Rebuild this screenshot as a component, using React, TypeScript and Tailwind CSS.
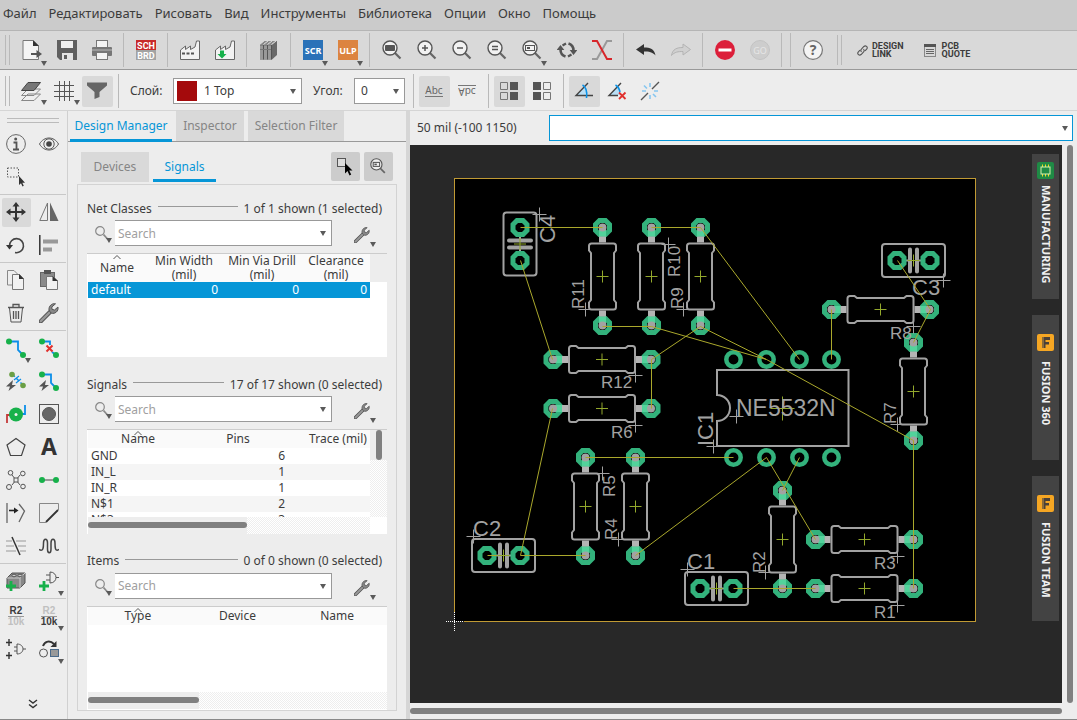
import { useState, type ReactNode } from "react";
import clsx from "clsx";

const MENU = ["Файл", "Редактировать", "Рисовать", "Вид", "Инструменты", "Библиотека", "Опции", "Окно", "Помощь"];

/* ---------- small building blocks ---------- */

function Icon({ children, size = "size-5" }: { children: ReactNode; size?: string }) {
  return (
    <svg viewBox="0 0 20 20" className={clsx("shrink-0", size)} fill="none" stroke="#555" strokeWidth="1" aria-hidden="true">
      {children}
    </svg>
  );
}

function Caret({ className = "" }: { className?: string }) {
  return (
    <svg viewBox="0 0 6 5" className={clsx("pointer-events-none absolute h-[5px] w-[6px]", className)} aria-hidden="true">
      <path d="M0 0H6L3 5Z" fill="#5a5a5a" />
    </svg>
  );
}

function TopButton({ label, menu, children }: { label: string; menu?: boolean; children: ReactNode }) {
  return (
    <button aria-label={label} className="relative flex h-8 w-[35px] shrink-0 items-center justify-center">
      {children}
      {menu && <Caret className="right-[2px] bottom-0" />}
    </button>
  );
}

function OptButton({ label, menu, active, children }: { label: string; menu?: boolean; active?: boolean; children: ReactNode }) {
  return (
    <button
      aria-label={label}
      className={clsx("relative flex size-[31px] shrink-0 items-center justify-center rounded-xs pr-px pb-px", active && "bg-[#d9d9d9]")}
    >
      {children}
      {menu && <Caret className="right-0 bottom-[2px]" />}
    </button>
  );
}

function Divider({ width = "w-[9px]" }: { width?: string }) {
  return (
    <div className={clsx("flex h-[34px] shrink-0 justify-center", width)}>
      <div className="w-px bg-[#b9b9b9]" />
    </div>
  );
}

function Grip() {
  return <div className="h-[30px] w-[5px] shrink-0 border-x border-[#b9b9b9]" />;
}

/* ---------- icons ---------- */

function Magnifier({ children }: { children?: ReactNode }) {
  return (
    <Icon>
      <path d="M12.5 12.5L18.5 18.5" strokeWidth="2.2" stroke="#666" />
      <circle cx="8" cy="8" r="7" fill="#f2f2f2" strokeWidth="1.4" />
      {children}
    </Icon>
  );
}

const WRENCH = (
  <>
    <path d="M1.800 18.200L11 9" stroke="#555" strokeWidth="4.400" strokeLinecap="round" />
    <path d="M1.800 18.200L11 9" stroke="#999" strokeWidth="2.400" strokeLinecap="round" />
    <path d="M16.500 .8C13 0 9.500 3 10 7C11 10 13 10.700 15 10.300C18 9.500 19.500 7 19 4L15.500 7L13 6.300L12.800 4Z" fill="#888" />
  </>
);

const icons = {
  open: (
    <Icon>
      <path d="M1 .5H11L16.500 6V19.500H1Z" fill="#f4f4f4" stroke="#777" />
      <path d="M11 0L17 6H11Z" fill="#333" stroke="none" />
      <path d="M9 14H16" strokeWidth="2" />
      <path d="M14.500 10L20 14L14.500 18Z" fill="#555" stroke="none" />
    </Icon>
  ),
  save: (
    <Icon>
      <path d="M0 0H20V20H3L0 17Z" fill="#606060" stroke="none" />
      <rect x="4" y="1" width="12" height="7" fill="#f0f0f0" stroke="none" />
      <rect x="5" y="13" width="11" height="7" fill="#e5e5e5" stroke="none" />
      <rect x="7" y="15" width="3" height="4" fill="#606060" stroke="none" />
    </Icon>
  ),
  print: (
    <Icon>
      <rect x="4.500" y=".5" width="11" height="8" fill="#f4f4f4" stroke="#777" />
      <rect x="0" y="7" width="20" height="9" rx="1" fill="#777" stroke="none" />
      <path d="M0 10H20" stroke="#bbb" />
      <rect x="4.500" y="12.500" width="11" height="7" fill="#f4f4f4" stroke="#777" />
    </Icon>
  ),
  schBrd: (
    <Icon>
      <rect width="20" height="10" fill="#c82a2a" stroke="none" />
      <rect y="10" width="20" height="10" fill="#a3a3a3" stroke="none" />
      <text x="10" y="8.500" textAnchor="middle" fontSize="9" fontWeight="700" fill="#fff" stroke="none" className="font-[Roboto]">SCH</text>
      <text x="10" y="18.500" textAnchor="middle" fontSize="9" fontWeight="700" fill="#fff" stroke="none" className="font-[Roboto]">BRD</text>
    </Icon>
  ),
  factory: (
    <Icon>
      <path d="M.5 19.500V10L5.500 6V9.500L10.500 6V9.500L15 7L16.500 1H19.500V19.500Z" fill="#f2f2f2" stroke="#666" />
      <path d="M2 13.500H14" strokeWidth="2" strokeDasharray="3 1.500" />
    </Icon>
  ),
  factoryDown: (
    <Icon>
      <path d="M.5 19.500V10L5.500 6V9.500L10.500 6V9.500L15 7L16.500 1H19.500V19.500Z" fill="#f2f2f2" stroke="#666" />
      <path d="M5 10.500H9V14H11.500L7 18.500L2.500 14H5Z" fill="#17b14b" stroke="none" />
    </Icon>
  ),
  books: (
    <Icon>
      <path d="M1 5L6 1H18V15L13 19.500H1Z" fill="#6a6a6a" stroke="none" />
      <path d="M1 5L6 1H18L13 5Z" fill="#8a8a8a" stroke="none" />
      <path d="M4.500 4.500L9 1M8.500 4.500L13 1M12.500 4.500L17 1" stroke="#e0e0e0" />
      <path d="M1 5.500H4V19.500H1ZM5 5.500H8V19.500H5ZM9 5.500H12V19.500H9Z" fill="#999" stroke="none" />
      <path d="M4.500 5V19.500M8.500 5V19.500M12.500 5V19.500" stroke="#555" />
      <path d="M1 9.500H12" stroke="#777" />
    </Icon>
  ),
  scr: (
    <Icon>
      <rect width="20" height="20" fill="#2a72b8" stroke="none" />
      <text x="10" y="13.500" textAnchor="middle" fontSize="9" fontWeight="700" fill="#fff" stroke="none" className="font-['Noto_Sans']">SCR</text>
    </Icon>
  ),
  ulp: (
    <Icon>
      <rect width="20" height="20" fill="#dc8440" stroke="none" />
      <text x="10" y="13.500" textAnchor="middle" fontSize="9" fontWeight="700" fill="#fff" stroke="none" className="font-['Noto_Sans']">ULP</text>
    </Icon>
  ),
  zoomFit: <Magnifier><rect x="3" y="5" width="10" height="6" rx="1" fill="#555" stroke="none" /></Magnifier>,
  zoomIn: <Magnifier><path d="M5 8H11M8 5V11" strokeWidth="1.5" /></Magnifier>,
  zoomOut: <Magnifier><path d="M5 8H11" strokeWidth="1.5" /></Magnifier>,
  zoomRedraw: <Magnifier><path d="M5 6.500H11M5 9.500H11" strokeWidth="1.5" /></Magnifier>,
  zoomSelect: (
    <Magnifier>
      <rect x="3.500" y="5.500" width="9" height="5" />
      <rect x="5" y="7" width="3" height="2" fill="#555" stroke="none" />
    </Magnifier>
  ),
  refresh: (
    <Icon>
      <path d="M3.500 9.500C3.500 13 5.500 15.500 8.500 16.500M16.500 10.500C16.500 7 14.500 4.500 11.500 3.500" strokeWidth="2.600" />
      <path d="M5.500 5.500L9 3.500M14.500 14.500L11 16.500" strokeWidth="2.200" />
      <path d="M-.3 10L3.500 5L7.300 10ZM12.700 10L16.500 15L20.300 10Z" fill="#555" stroke="none" />
    </Icon>
  ),
  ripup: (
    <Icon>
      <path d="M0 19H5L15 1H20" stroke="#999" strokeWidth="2" />
      <path d="M0 1H5L15 19H20" stroke="#d7262b" strokeWidth="2" />
    </Icon>
  ),
  undo: (
    <Icon>
      <path d="M0 9.500L8 4V7.500C14 7.500 18.500 9 19.500 15.500C16.500 12 13 11.500 8 11.500V15Z" fill="#333" stroke="none" />
    </Icon>
  ),
  redo: (
    <Icon>
      <path d="M19.500 9.500L12 4V7.500C6 7.500 1.500 9 .5 15.500C3.500 12 7 11.500 12 11.500V15Z" fill="#d0d0d0" stroke="#b3b3b3" />
    </Icon>
  ),
  stop: (
    <Icon>
      <circle cx="10" cy="10" r="10" fill="#dc1f3a" stroke="none" />
      <rect x="3.500" y="8.500" width="13" height="3" fill="#fff" stroke="none" />
    </Icon>
  ),
  go: (
    <Icon>
      <circle cx="10" cy="10" r="9.500" fill="#cdcdcd" stroke="#c3c3c3" />
      <text x="10" y="13.500" textAnchor="middle" fontSize="9" fill="#e6e6e6" stroke="none" className="font-['Noto_Sans']">GO</text>
    </Icon>
  ),
  help: (
    <Icon>
      <circle cx="10" cy="10" r="9.400" fill="#f4f4f4" stroke="#777" strokeWidth="1.2" />
      <text x="10" y="15" textAnchor="middle" fontSize="14" fontWeight="700" fill="#666" stroke="none" className="font-['Noto_Sans']">?</text>
    </Icon>
  ),
  layers: (
    <Icon>
      <path d="M.5 19.500L7 13H19.500L13 19.500ZM.5 14.500L7 8H19.500L13 14.500Z" fill="#eee" stroke="#888" />
      <path d="M.5 9.500L7 1.500H19.500L13 9.500Z" fill="#777" stroke="#444" />
    </Icon>
  ),
  grid: <Icon><path d="M5.500 0V20M10.500 0V20M15.500 0V20M0 4.500H20M0 10.500H20M0 15.500H20" /></Icon>,
  funnel: <Icon><path d="M0 1.500H20V4.500L12.500 11V16L7.500 18V11L0 4.500Z" fill="#666" stroke="none" /></Icon>,
  squaresA: (
    <Icon>
      <path d="M1.500 1.500H8.500V8.500H1.500ZM1.500 11.500H8.500V18.500H1.500Z" stroke="#777" />
      <path d="M11 1H19V9H11ZM11 11H19V19H11Z" fill="#555" stroke="none" />
    </Icon>
  ),
  squaresB: (
    <Icon>
      <path d="M11.500 1.500H18.500V8.500H11.500ZM11.500 11.500H18.500V18.500H11.500Z" stroke="#777" />
      <path d="M1 1H9V9H1ZM1 11H9V19H1Z" fill="#555" stroke="none" />
    </Icon>
  ),
  angle: (
    <Icon>
      <path d="M3 14L10 6C12.500 8 13.500 10.500 13.500 14Z" fill="#b9def5" stroke="none" />
      <path d="M19 14.500H2L14 2" stroke="#444" strokeWidth="1.400" />
      <path d="M8.500 4C12 6 13.500 10 12.500 17" stroke="#0c93e8" strokeWidth="1.600" />
    </Icon>
  ),
  angleOff: (
    <Icon>
      <path d="M3 14L10 6C12.500 8 13.500 10.500 13.500 14Z" fill="#b9def5" stroke="none" />
      <path d="M11 14.500H2L14 2" stroke="#444" strokeWidth="1.400" />
      <path d="M8.500 4C11 5.500 12.500 8 13 11" stroke="#0c93e8" strokeWidth="1.600" />
      <path d="M12 11.500L18.500 18M18.500 11.500L12 18" stroke="#e0302e" strokeWidth="1.800" />
    </Icon>
  ),
  snap: (
    <Icon>
      <path d="M1 19L8 12M12 8L19 1" strokeWidth="1.400" />
      <path d="M10 2V6M10 14V18M2 10H6M14 10H18M4 4.500L7 7.500M13 13L16 16" stroke="#86c6f0" strokeWidth="1.600" />
    </Icon>
  ),
  info: (
    <Icon>
      <circle cx="10" cy="10" r="9.400" stroke="#666" />
      <circle cx="9.700" cy="5" r="1.500" fill="#555" stroke="none" />
      <path d="M7.500 8.500H10.500V15M7 15.500H13" strokeWidth="1.800" />
    </Icon>
  ),
  eye: (
    <Icon>
      <path d="M.5 10C5 2 15 2 19.500 10C15 18 5 18 .5 10Z" />
      <circle cx="10" cy="10" r="5.200" fill="#eee" />
      <circle cx="10" cy="10" r="2.800" fill="#444" stroke="none" />
    </Icon>
  ),
  marquee: (
    <Icon>
      <rect x="1.500" y="1" width="11" height="9" strokeDasharray="1.500 1.500" />
      <path d="M13 9V18L15 16.200L16.500 19.500L17.800 18.700L16.300 15.700H19Z" fill="#333" stroke="none" />
    </Icon>
  ),
  move: (
    <Icon>
      <path d="M10 3V17M3 10H17" stroke="#333" strokeWidth="2" />
      <path d="M10 0L13.500 4.500H6.500ZM10 20L13.500 15.500H6.500ZM0 10L4.500 6.500V13.500ZM20 10L15.500 6.500V13.500Z" fill="#333" stroke="none" />
    </Icon>
  ),
  mirror: (
    <Icon>
      <path d="M8.500 1V18.500H.8Z" stroke="#777" />
      <path d="M11 .5L19.500 19H11Z" fill="#666" stroke="none" />
    </Icon>
  ),
  rotate: (
    <Icon>
      <path d="M3.500 11A7 7 0 1 1 9 17.500" stroke="#444" strokeWidth="1.600" />
      <path d="M0 10H7L3.500 14.500Z" fill="#333" stroke="none" />
    </Icon>
  ),
  align: (
    <Icon>
      <path d="M.8 0V20" stroke="#333" strokeWidth="1.500" />
      <path d="M4 4.500H19V8.500H4ZM4 12.500H13V16.500H4Z" fill="#999" stroke="none" />
    </Icon>
  ),
  copy: (
    <Icon>
      <path d="M1.500 .5H8L11.500 4V15H1.500Z" fill="#eee" stroke="#888" />
      <path d="M6.500 4.500H13.500L17.500 9V19.500H6.500Z" fill="#f2f2f2" stroke="#777" />
      <path d="M13 4L18 9H13Z" fill="#333" stroke="none" />
    </Icon>
  ),
  paste: (
    <Icon>
      <rect x="1.500" y="2.500" width="14" height="14" fill="#8a8a8a" stroke="#666" />
      <rect x="5" y="0" width="7" height="4" fill="#555" stroke="none" />
      <path d="M7.500 6.500H14L18.500 11V19.500H7.500Z" fill="#f2f2f2" stroke="#777" />
      <path d="M13.500 6L19 11H13.500Z" fill="#333" stroke="none" />
    </Icon>
  ),
  trash: (
    <Icon>
      <path d="M3.500 5L5 19H15L16.500 5" />
      <path d="M2 4.500H18M7 4V1.500H13V4M7.500 8V16M10 8V16M12.500 8V16" strokeWidth="1.300" />
    </Icon>
  ),
  wrench: <Icon>{WRENCH}</Icon>,
  route: (
    <Icon>
      <path d="M3 3.500H12V12L17 17" stroke="#0c8ee8" strokeWidth="1.800" />
      <circle cx="3" cy="3.500" r="3" fill="#17b14b" stroke="none" />
      <circle cx="17" cy="17" r="3" fill="#17b14b" stroke="none" />
    </Icon>
  ),
  unroute: (
    <Icon>
      <path d="M3 3.500H11V7M13 14L17 17" stroke="#0c8ee8" strokeWidth="1.800" />
      <circle cx="3" cy="3.500" r="3" fill="#17b14b" stroke="none" />
      <circle cx="17" cy="17" r="3" fill="#17b14b" stroke="none" />
      <path d="M7.500 7.500L13.500 13.500M13.500 7.500L7.500 13.500" stroke="#e0302e" strokeWidth="2" />
    </Icon>
  ),
  autoroute: (
    <Icon>
      <path d="M6 3L17 14" stroke="#0c8ee8" strokeWidth="1.500" strokeDasharray="4 2" />
      <path d="M8 9L13 5M10 12L15 8" stroke="#0c8ee8" strokeWidth="1.200" />
      <circle cx="6" cy="3.500" r="2.800" fill="#6b9f45" stroke="none" />
      <circle cx="17" cy="14.500" r="2.800" fill="#6b9f45" stroke="none" />
      <path d="M7 9L0 15.500H4L2.500 20L10 14H6Z" fill="#555" stroke="none" />
    </Icon>
  ),
  quickroute: (
    <Icon>
      <path d="M3 3.500H12V12L17 17" stroke="#0c8ee8" strokeWidth="1.800" />
      <circle cx="3" cy="3.500" r="3" fill="#17b14b" stroke="none" />
      <circle cx="17" cy="17" r="3" fill="#17b14b" stroke="none" />
      <path d="M7 9L0 15.500H4L2.500 20L10 14H6Z" fill="#555" stroke="none" />
    </Icon>
  ),
  via: (
    <Icon>
      <path d="M1 19V11H6" stroke="#c43a3a" strokeWidth="1.800" />
      <path d="M19 1V10H14" stroke="#0c8ee8" strokeWidth="1.800" />
      <circle cx="10" cy="10.500" r="7" fill="#17b14b" stroke="none" />
      <circle cx="10" cy="10.500" r="1.500" fill="#f2f2f2" stroke="none" />
    </Icon>
  ),
  hole: (
    <Icon>
      <rect x=".5" y=".5" width="19" height="19" />
      <circle cx="10" cy="10" r="6.500" fill="#666" />
    </Icon>
  ),
  polygon: <Icon><path d="M10 1.500L19 8L15.500 18.500H4.500L1 8Z" stroke="#444" strokeWidth="1.200" /></Icon>,
  text: (
    <Icon>
      <text x="10" y="18" textAnchor="middle" fontSize="23" fontWeight="700" fill="#333" stroke="none" className="font-['Noto_Sans']">A</text>
    </Icon>
  ),
  ratsnest: (
    <Icon>
      <path d="M6 5L14 15M14 5L6 15" />
      <rect x="8" y="8" width="4" height="4" fill="#eee" />
      <circle cx="4.500" cy="2.800" r="2.300" />
      <circle cx="16.800" cy="3.500" r="2.300" />
      <circle cx="3" cy="17" r="2.500" />
      <circle cx="17" cy="16.500" r="2.300" />
    </Icon>
  ),
  airwire: (
    <Icon>
      <path d="M3 10H17" stroke="#999" strokeWidth="2" />
      <circle cx="3" cy="10" r="3" fill="#17b14b" stroke="none" />
      <circle cx="17" cy="10" r="3" fill="#17b14b" stroke="none" />
    </Icon>
  ),
  split: (
    <Icon>
      <path d="M1 0V20M13 1L18.500 8L13 19" stroke="#666" strokeWidth="1.300" />
      <path d="M3 7.500H9" stroke="#222" strokeWidth="1.600" />
      <path d="M8 4.500L12.500 7.500L8 10.500Z" fill="#222" stroke="none" />
    </Icon>
  ),
  miter: (
    <Icon>
      <path d="M7 19.500H.5V.5H19.500V7" stroke="#888" />
      <path d="M7 19L19 7" stroke="#333" strokeWidth="1.800" />
    </Icon>
  ),
  cutLines: (
    <Icon>
      <path d="M0 5H6M10 5H20M0 10H8M12 10H20M0 15H10M14 15H20" stroke="#999" />
      <path d="M6 1L14 19" stroke="#333" strokeWidth="1.500" />
    </Icon>
  ),
  meander: <Icon><path d="M0 13.500C4.500 16 4.500 11 4.500 7C4.500 2 8.500 2 8.500 7V13C8.500 18 12 18 12 13V7C12 2 16 2 16 7C16 11 16 16 20 13.500" stroke="#444" strokeWidth="1.500" /></Icon>,
  addPart: (
    <Icon>
      <path d="M1 7L6 2H19V12L14 17H1Z" fill="#888" stroke="#555" />
      <path d="M1 7H14V17M14 7L19 2" stroke="#ccc" />
      <ellipse cx="8" cy="4.500" rx="2" ry="1.300" fill="#ccc" />
      <ellipse cx="14" cy="4.500" rx="2" ry="1.300" fill="#ccc" />
      <path d="M5 10V20M0 15H10" stroke="#17b14b" strokeWidth="2.800" />
    </Icon>
  ),
  addGate: (
    <Icon>
      <path d="M11 1V12C19 12 19 1 11 1ZM7 4H11M7 9H11M17 6.500H20" />
      <path d="M5 10V20M0 15H10" stroke="#17b14b" strokeWidth="2.800" />
    </Icon>
  ),
  gates: (
    <Icon>
      <path d="M11 5V15C19 15 19 5 11 5ZM8 8H11M8 12H11M17 10H20" />
      <path d="M3 0V7M0 3.500H6M3 13V20M0 16.500H6" stroke="#333" strokeWidth="1.400" />
    </Icon>
  ),
  replace: (
    <Icon>
      <path d="M4 7C6 2 11 1 15 5" stroke="#333" strokeWidth="2" />
      <path d="M17.500 2V8H11.500Z" fill="#333" stroke="none" />
      <circle cx="4.500" cy="14" r="4" />
      <rect x="11.500" y="10.500" width="8" height="7" fill="#999" stroke="#4a6a8a" />
    </Icon>
  ),
  pick: (
    <Icon>
      <rect x="2.500" y="2.500" width="8" height="8" fill="#ddd" />
      <path d="M10 7V17.500L12.500 15L14.500 19.500L16.200 18.500L14.200 14.500H17.500Z" fill="#000" stroke="none" />
    </Icon>
  ),
  zoomTo: (
    <Icon size="size-4">
      <path d="M12.500 12.500L18.500 18.500" strokeWidth="2.200" stroke="#666" />
      <circle cx="8" cy="8" r="7" fill="#eee" strokeWidth="1.400" />
      <rect x="4" y="5.500" width="8" height="5" strokeWidth="1.300" />
      <rect x="5.500" y="7" width="3" height="2" fill="#555" stroke="none" />
    </Icon>
  ),
};

const r2Top = (
  <span className="flex flex-col font-['Liberation_Sans'] text-[10px] leading-[10px] font-bold">
    <span className="border-b border-[#999]">R2</span>
    <span className="text-[#c0c0c0]">10k</span>
  </span>
);
const r2Bottom = (
  <span className="flex flex-col font-['Liberation_Sans'] text-[10px] leading-[10px] font-bold">
    <span className="border-b border-[#999] text-[#c0c0c0]">R2</span>
    <span>10k</span>
  </span>
);

/* ---------- toolbars ---------- */

function MenuBar() {
  return (
    <nav className="flex h-[31px] shrink-0 items-center gap-3 border-b border-[#b5b5b5] bg-[#cbcbcb] pb-1 pl-[3px] text-[13px]">
      {MENU.map((item) => (
        <button key={item} className="shrink-0">{item}</button>
      ))}
    </nav>
  );
}

function MainToolbar() {
  return (
    <div className="flex h-[39px] shrink-0 items-center border-b border-[#999] bg-[#d9d9d9] pl-[5px]">
      <Grip />
      <div className="w-1 shrink-0" />
      <TopButton label="Открыть" menu>{icons.open}</TopButton>
      <TopButton label="Сохранить">{icons.save}</TopButton>
      <TopButton label="Печать">{icons.print}</TopButton>
      <Divider />
      <TopButton label="SCH/BRD">{icons.schBrd}</TopButton>
      <Divider />
      <TopButton label="CAM">{icons.factory}</TopButton>
      <TopButton label="CAM export">{icons.factoryDown}</TopButton>
      <Divider />
      <TopButton label="Библиотека">{icons.books}</TopButton>
      <Divider />
      <TopButton label="SCR" menu>{icons.scr}</TopButton>
      <TopButton label="ULP" menu>{icons.ulp}</TopButton>
      <Divider />
      <TopButton label="Zoom fit">{icons.zoomFit}</TopButton>
      <TopButton label="Zoom in">{icons.zoomIn}</TopButton>
      <TopButton label="Zoom out">{icons.zoomOut}</TopButton>
      <TopButton label="Redraw">{icons.zoomRedraw}</TopButton>
      <TopButton label="Zoom select" menu>{icons.zoomSelect}</TopButton>
      <TopButton label="Refresh">{icons.refresh}</TopButton>
      <TopButton label="Ratsnest">{icons.ripup}</TopButton>
      <Divider />
      <TopButton label="Undo">{icons.undo}</TopButton>
      <TopButton label="Redo">{icons.redo}</TopButton>
      <Divider />
      <TopButton label="Stop">{icons.stop}</TopButton>
      <TopButton label="Go">{icons.go}</TopButton>
      <Divider />
      <Divider />
      <TopButton label="Help">{icons.help}</TopButton>
      <div className="w-[7px] shrink-0" />
      <Grip />
      <button className="ml-[15px] flex shrink-0 items-center gap-1 text-left font-[Roboto] text-[9px] leading-[8px] font-bold">
        <svg viewBox="0 0 12 12" className="size-[11px]" fill="none" stroke="#555" strokeWidth="1.2" aria-hidden="true">
          <path d="M5 7.500C3.800 6.500 4 5.300 4.800 4.500L7.500 1.600C9.500 0 12.200 2.200 10.700 4.300L8.800 6.300M7 4.500C8.200 5.500 8 6.700 7.200 7.500L4.500 10.400C2.500 12-.2 9.800 1.300 7.700L3.200 5.700" />
        </svg>
        <span>DESIGN<br />LINK</span>
      </button>
      <button className="ml-5 flex shrink-0 items-center gap-[6px] text-left font-[Roboto] text-[9px] leading-[8px] font-bold">
        <svg viewBox="0 0 12 13" className="h-[13px] w-3" fill="none" aria-hidden="true">
          <rect x=".5" y=".5" width="11" height="12" stroke="#888" />
          <rect width="12" height="3" fill="#555" />
          <path d="M2 5.500H10M2 7.500H10M2 9.500H10" stroke="#666" />
        </svg>
        <span>PCB<br />QUOTE</span>
      </button>
    </div>
  );
}

function OptionsBar() {
  const [layer, setLayer] = useState("1 Top");
  const [angle, setAngle] = useState("0");

  return (
    <div className="flex h-[41px] shrink-0 items-center border-b border-[#d5d5d5] pt-[2px] pl-[5px]">
      <Grip />
      <div className="ml-[6px] flex shrink-0 gap-[2px]">
        <OptButton label="Layers" menu>{icons.layers}</OptButton>
        <OptButton label="Grid" menu>{icons.grid}</OptButton>
        <OptButton label="Filter" active>{icons.funnel}</OptButton>
      </div>
      <Divider width="w-[11px]" />
      <label htmlFor="layer" className="w-[49px] shrink-0 pl-[6px]">Слой:</label>
      <div className="relative h-[26px] w-[129px] shrink-0">
        <select
          id="layer"
          value={layer}
          onChange={(e) => setLayer(e.target.value)}
          className="h-full w-full appearance-none border border-[#999] bg-white pl-[30px]"
        >
          <option>1 Top</option>
          <option>16 Bottom</option>
        </select>
        <span className="pointer-events-none absolute top-[3px] left-1 size-5 bg-[#a40a0c]" />
        <Caret className="top-[11px] right-[6px]" />
      </div>
      <label htmlFor="angle" className="w-[52px] shrink-0 pl-[11px]">Угол:</label>
      <div className="relative h-[26px] w-[51px] shrink-0">
        <select
          id="angle"
          value={angle}
          onChange={(e) => setAngle(e.target.value)}
          className="h-full w-full appearance-none border border-[#999] bg-white pl-[6px]"
        >
          <option>0</option>
          <option>90</option>
        </select>
        <Caret className="top-[11px] right-[6px]" />
      </div>
      <div className="w-[3px] shrink-0" />
      <Divider width="w-[11px]" />
      <div className="flex shrink-0 gap-[2px]">
        <OptButton label="Text upright" active>
          <span className="border-b border-[#777] text-[10px] leading-[11px] text-[#666]">Abc</span>
        </OptButton>
        <OptButton label="Text mirrored">
          <span className="-scale-y-100 border-b border-[#777] text-[10px] leading-[11px] text-[#666]">Abc</span>
        </OptButton>
      </div>
      <Divider width="w-[11px]" />
      <div className="flex shrink-0 gap-[2px]">
        <OptButton label="Group right" active>{icons.squaresA}</OptButton>
        <OptButton label="Group left">{icons.squaresB}</OptButton>
      </div>
      <Divider width="w-[11px]" />
      <div className="flex shrink-0 gap-[2px]">
        <OptButton label="Angle" active>{icons.angle}</OptButton>
        <OptButton label="Angle off">{icons.angleOff}</OptButton>
        <OptButton label="Snap">{icons.snap}</OptButton>
      </div>
    </div>
  );
}

/* ---------- left tool palette ---------- */

type Tool = { name: string; icon: ReactNode; menu?: boolean; active?: boolean };

const TOOL_GROUPS: Tool[][] = [
  [
    { name: "Info", icon: icons.info },
    { name: "Show", icon: icons.eye },
    { name: "Group", icon: icons.marquee },
  ],
  [
    { name: "Move", icon: icons.move, active: true },
    { name: "Mirror", icon: icons.mirror },
    { name: "Rotate", icon: icons.rotate },
    { name: "Align", icon: icons.align },
  ],
  [
    { name: "Copy", icon: icons.copy },
    { name: "Paste", icon: icons.paste },
    { name: "Delete", icon: icons.trash },
    { name: "Change", icon: icons.wrench },
  ],
  [
    { name: "Route", icon: icons.route, menu: true },
    { name: "Ripup", icon: icons.unroute },
    { name: "Autorouter", icon: icons.autoroute },
    { name: "Quickroute", icon: icons.quickroute },
    { name: "Via", icon: icons.via },
    { name: "Hole", icon: icons.hole },
    { name: "Polygon", icon: icons.polygon },
    { name: "Text", icon: icons.text },
    { name: "Ratsnest", icon: icons.ratsnest },
    { name: "Signal", icon: icons.airwire },
    { name: "Split", icon: icons.split },
    { name: "Miter", icon: icons.miter },
    { name: "Slice", icon: icons.cutLines },
    { name: "Meander", icon: icons.meander },
  ],
  [
    { name: "Add part", icon: icons.addPart },
    { name: "Add gate", icon: icons.addGate, menu: true },
  ],
  [
    { name: "Name", icon: r2Top },
    { name: "Value", icon: r2Bottom, menu: true },
    { name: "Gateswap", icon: icons.gates },
    { name: "Replace", icon: icons.replace, menu: true },
  ],
];

function ToolPalette() {
  return (
    <aside className="flex w-[68px] shrink-0 flex-col border-r border-[#d0d0d0] pr-px">
      <div className="mx-[7px] mt-[7px] mb-1 h-[5px] shrink-0 border-y border-[#bbb]" />
      {TOOL_GROUPS.map((group, i) => (
        <div key={i} className={clsx("grid shrink-0 grid-cols-2 pt-px", i < TOOL_GROUPS.length - 1 && "border-b border-[#c8c8c8]")}>
          {group.map((tool) => (
            <div key={tool.name} className="flex h-[33px] items-center justify-center">
              <button
                aria-label={tool.name}
                className={clsx("relative flex size-[29px] items-center justify-center rounded-xs pr-px pb-px", tool.active && "bg-[#d9d9d9]")}
              >
                {tool.icon}
                {tool.menu && <Caret className="right-0 bottom-0" />}
              </button>
            </div>
          ))}
        </div>
      ))}
      <button aria-label="More tools" className="mt-auto mb-[9px] flex h-3 items-center justify-center">
        <svg viewBox="0 0 10 10" className="size-[10px]" fill="none" stroke="#333" strokeWidth="1.4" aria-hidden="true">
          <path d="M1 1L5 4L9 1M1 5.500L5 8.500L9 5.500" />
        </svg>
      </button>
    </aside>
  );
}

/* ---------- design manager ---------- */

function Section({ title, status, children }: { title: string; status: string; children: ReactNode }) {
  const id = "search-" + title;
  return (
    <section className="flex min-h-0 flex-1 flex-col">
      <div className="mr-[5px] flex h-[18px] shrink-0 items-center gap-[6px] pt-px">
        <label htmlFor={id}>{title}</label>
        <span className="mb-1 h-px flex-1 bg-[#999]" />
        <span>{status}</span>
      </div>
      <div className="mt-[3px] flex h-[26px] shrink-0 items-center">
        <button aria-label="Search options" className="relative h-5 w-7 shrink-0 pl-2">
          <svg viewBox="0 0 14 14" className="size-3.5" fill="none" stroke="#888" aria-hidden="true">
            <circle cx="5" cy="5" r="4.300" strokeWidth="1.200" />
            <path d="M8.500 8.500L12.500 13" strokeWidth="1.800" />
          </svg>
          <Caret className="right-[3px] bottom-0" />
        </button>
        <div className="relative h-full w-[217px] shrink-0">
          <input
            id={id}
            placeholder="Search"
            className="h-full w-full border border-l-0 border-[#999] bg-white pl-[3px] outline-none placeholder:text-[#a0a0a0]"
          />
          <Caret className="top-[11px] right-[6px]" />
        </div>
        <button aria-label="Column settings" className="relative ml-[22px] h-[26px] w-[22px] shrink-0 pt-1">
          <span className="flex"><Icon size="size-4">{WRENCH}</Icon></span>
          <Caret className="right-0 -bottom-px" />
        </button>
      </div>
      <div className="mt-[7px] flex min-h-0 flex-1 flex-col border-t border-[#ccc] bg-white pl-px">{children}</div>
    </section>
  );
}

function SortArrow() {
  return (
    <svg viewBox="0 0 8 4" className="absolute top-px left-1/2 h-1 w-2 -translate-x-1/2" fill="none" stroke="#555" aria-hidden="true">
      <path d="M.5 4L4 .5L7.500 4" />
    </svg>
  );
}

const NET_COLUMNS = ["Min Width", "Min Via Drill", "Clearance"];
const SIGNALS = [
  { name: "GND", pins: 6 },
  { name: "IN_L", pins: 1 },
  { name: "IN_R", pins: 1 },
  { name: "N$1", pins: 2 },
  { name: "N$3", pins: 3 },
];

const DOTS = "bg-[repeating-conic-gradient(#fff_0_25%,#eee_0_50%)] bg-[length:2px_2px]";

function DesignManager() {
  const [tab, setTab] = useState("Signals");

  return (
    <div className="flex w-[338px] shrink-0 flex-col">
      <div className="flex h-[31px] shrink-0 gap-1 border-b border-[#999] pl-[2px] text-[#858585]">
        <button className="h-[31px] w-[102px] border-b-3 border-[#0696d7] pt-[2px] text-[#0696d7]">Design Manager</button>
        <button className="w-[68px] bg-[#d9d9d9]">Inspector</button>
        <button className="w-24 bg-[#d9d9d9]">Selection Filter</button>
      </div>

      <div className="mx-[10px] mt-[10px] mb-[2px] flex h-[30px] shrink-0 gap-1 pr-[3px] pl-[3px]">
        {["Devices", "Signals"].map((name) => (
          <button
            key={name}
            onClick={() => setTab(name)}
            className={clsx(
              name === "Devices" ? "w-[68px]" : "w-[63px]",
              tab === name ? "border-b-3 border-[#0696d7] pt-[2px] text-[#0696d7]" : "bg-[#d9d9d9] text-[#858585]"
            )}
          >
            {name}
          </button>
        ))}
        <button aria-label="Pick" className="ml-auto flex size-[29px] items-center justify-center rounded-xs bg-[#ccc] pr-px pb-px">{icons.pick}</button>
        <button aria-label="Zoom to" className="flex size-[29px] items-center justify-center rounded-xs bg-[#ccc] pr-px pb-px">{icons.zoomTo}</button>
      </div>

      <div className="mx-[9px] mb-2 flex min-h-0 flex-1 flex-col gap-[18px] border border-[#d3d3d3] pt-[14px] pr-[9px] pl-[9px]">
        <Section title="Net Classes" status="1 of 1 shown (1 selected)">
          <div className="flex">
            <table className="w-[282px] table-fixed">
              <thead>
                <tr className="h-7 bg-[#fafafa] leading-[14px]">
                  <th className="relative w-[58px] font-normal"><SortArrow />Name</th>
                  {NET_COLUMNS.map((col, i) => (
                    <th key={col} className={clsx("p-0 font-normal", i === 0 ? "w-[76px]" : i === 1 ? "w-20" : "w-[68px]")}>
                      {col}<br />(mil)
                    </th>
                  ))}
                </tr>
              </thead>
              <tbody>
                <tr className="h-4 bg-[#0696d7] leading-4 text-white">
                  <td className="pl-[3px]">default</td>
                  <td className="pr-1 text-right">0</td>
                  <td className="pr-[3px] text-right">0</td>
                  <td className="pr-[3px] text-right">0</td>
                </tr>
              </tbody>
            </table>
            <div className="h-7 flex-1 bg-[#ededed]" />
          </div>
        </Section>

        <Section title="Signals" status="17 of 17 shown (0 selected)">
          <div className="flex min-h-0 flex-1">
            <div className="min-w-0 flex-1 overflow-hidden">
              <table className="w-[300px] table-fixed">
                <thead>
                  <tr className="h-[18px] bg-[#fafafa] leading-[18px]">
                    <th className="relative font-normal"><SortArrow />Name</th>
                    <th className="font-normal">Pins</th>
                    <th className="font-normal">Trace (mil)</th>
                  </tr>
                </thead>
                <tbody>
                  {SIGNALS.map((s) => (
                    <tr key={s.name} className="h-4 leading-4 even:bg-[#f5f5f5]">
                      <td className="pl-[3px]">{s.name}</td>
                      <td className="pr-[3px] text-right">{s.pins}</td>
                      <td />
                    </tr>
                  ))}
                </tbody>
              </table>
            </div>
            <div className={clsx("w-[17px] shrink-0", DOTS)}>
              <div className="flex h-[30px] justify-center bg-[#ededed]"><div className="w-[6px] rounded-full bg-[#808080]" /></div>
            </div>
          </div>
          <div className={clsx("mr-[17px] h-[17px] shrink-0", DOTS)}>
            <div className="flex h-full w-[159px] items-center bg-[#ededed]"><div className="h-[6px] w-full rounded-full bg-[#808080]" /></div>
          </div>
        </Section>

        <Section title="Items" status="0 of 0 shown (0 selected)">
          <table className="w-full table-fixed">
            <thead>
              <tr className="h-[18px] bg-[#fafafa] leading-[18px]">
                <th className="relative font-normal"><SortArrow />Type</th>
                <th className="font-normal">Device</th>
                <th className="font-normal">Name</th>
              </tr>
            </thead>
          </table>
          <div className={clsx("mt-auto mb-px h-[17px] shrink-0", DOTS)}>
            <div className="flex h-full w-[111px] items-center bg-[#ededed]"><div className="h-[6px] w-full rounded-full bg-[#808080]" /></div>
          </div>
        </Section>
      </div>
    </div>
  );
}

/* ---------- board ---------- */

const SILK = "#a2a2a2";
const PAD = "#33b27c";

function Cross({ x, y, r = 6, color = SILK }: { x: number; y: number; r?: number; color?: string }) {
  return <path d={`M${x - r} ${y}H${x + r}M${x} ${y - r}V${y + r}`} stroke={color} />;
}

// octagonal pad with a drill hole
function Pad({ x, y }: { x: number; y: number }) {
  return <path d="M-3 -7H3L7 -3V3L3 7H-3L-7 3V-3Z" transform={`translate(${x} ${y})`} fill="none" stroke={PAD} strokeWidth="5" />;
}

function Resistor({ x, y, vertical }: { x: number; y: number; vertical?: boolean }) {
  return (
    <g transform={`translate(${x} ${y})${vertical ? " rotate(90)" : ""}`}>
      <Pad x={-49} y={0} />
      <Pad x={49} y={0} />
      <path d="M-49 0H-40M49 0H40" stroke="#52d39b" strokeWidth="7" />
      <path d="M-40 0H-34M40 0H34" stroke="#b4b4b4" strokeWidth="7" />
      <circle cx="-49" cy="0" r="4" fill={SILK} />
      <circle cx="49" cy="0" r="4" fill={SILK} />
      <path
        d="M-33 -11V11Q-33 13.500 -30.500 13.500H-26L-23.500 11.500H23.500L26 13.500H30.500Q33 13.500 33 11V-11Q33 -13.500 30.500 -13.500H26L23.500 -11.500H-23.500L-26 -13.500H-30.500Q-33 -13.500 -33 -11Z"
        stroke={SILK}
        strokeWidth="2"
      />
      <Cross x={0} y={0} color="#93a82c" />
    </g>
  );
}

function Capacitor({ x, y, vertical }: { x: number; y: number; vertical?: boolean }) {
  return (
    <g transform={`translate(${x} ${y})${vertical ? " rotate(90)" : ""}`}>
      <rect x="-31.500" y="-16.500" width="63" height="33" rx="3" stroke={SILK} strokeWidth="2" />
      <path d="M-10 0H-4M4 0H10" stroke={SILK} strokeWidth="2" />
      <path d="M-3.500 -11V11M3.500 -11V11" stroke={SILK} strokeWidth="4" strokeLinecap="round" />
      <Pad x={-16.5} y={0} />
      <Pad x={16.5} y={0} />
      <Cross x={0} y={0} color="#93a82c" />
    </g>
  );
}

const RESISTORS = [
  { x: 602.5, y: 276.5, vertical: true },
  { x: 651.5, y: 276.5, vertical: true },
  { x: 700.5, y: 276.5, vertical: true },
  { x: 602, y: 359.5 },
  { x: 602, y: 408.5 },
  { x: 880.5, y: 309.5 },
  { x: 913.5, y: 391.5, vertical: true },
  { x: 585.5, y: 506.5, vertical: true },
  { x: 635.5, y: 506.5, vertical: true },
  { x: 782.5, y: 539.5, vertical: true },
  { x: 864.5, y: 539.5 },
  { x: 864.5, y: 588.5 },
];

const CAPACITORS = [
  { x: 520, y: 244, vertical: true },
  { x: 913.5, y: 260.5 },
  { x: 503.5, y: 555.5 },
  { x: 716.5, y: 588.5 },
];

// text anchor plus the position of its origin cross
const LABELS = [
  { t: "C4", x: 555, y: 243, s: 22, v: true, cx: 539.5, cy: 214.5 },
  { t: "C3", x: 912, y: 295, s: 22, cx: 943.5, cy: 280.5 },
  { t: "C2", x: 473, y: 536, s: 22, cx: 473.5, cy: 536.5 },
  { t: "C1", x: 687, y: 569, s: 22, cx: 687.5, cy: 569.5 },
  { t: "IC1", x: 713, y: 446, s: 22, v: true, cx: 713.5, cy: 446.5 },
  { t: "NE5532N", x: 736, y: 416, s: 23, cx: 736.5, cy: 416.5 },
  { t: "R11", x: 584, y: 309, s: 17, v: true, cx: 585.5, cy: 309.5 },
  { t: "R10", x: 680, y: 277, s: 17, v: true, cx: 668.5, cy: 244.5 },
  { t: "R9", x: 683, y: 309, s: 17, v: true, cx: 683.5, cy: 309.5 },
  { t: "R12", x: 601, y: 388, s: 17, cx: 635.5, cy: 375.5 },
  { t: "R6", x: 611, y: 438, s: 17, cx: 635.5, cy: 425.5 },
  { t: "R8", x: 890, y: 339, s: 17, cx: 913.5, cy: 326.5 },
  { t: "R7", x: 896, y: 424, s: 17, v: true, cx: 897.5, cy: 424.5 },
  { t: "R5", x: 615, y: 497, s: 17, v: true, cx: 602.5, cy: 473.5 },
  { t: "R4", x: 617, y: 540, s: 17, v: true, cx: 618.5, cy: 539.5 },
  { t: "R2", x: 765, y: 573, s: 17, v: true, cx: 765.5, cy: 572.5 },
  { t: "R3", x: 874, y: 569, s: 17, cx: 897.5, cy: 556.5 },
  { t: "R1", x: 874, y: 618, s: 17, cx: 897.5, cy: 605.5 },
];

const AIRWIRES = [
  "M520.5 227.5H602.5",
  "M520.5 260.5L552.5 359.5",
  "M602.5 326.5H651.5L766.5 359.5",
  "M651.5 227.5H700.5L799.5 359.5",
  "M651.5 359.5L700.5 326.5L766.5 359.5L913.5 440.5",
  "M651.5 359.5V408.5",
  "M552.5 408.5L520.5 555.5",
  "M487.5 555.5H497M520.5 555.5H585.5",
  "M585.5 457.5H733.5",
  "M635.5 555.5L766.5 457.5L815.5 539.5",
  "M799.5 457.5L782.5 490.5",
  "M733.5 588.5H815.5",
  "M913.5 440.5V588.5",
  "M897.5 260.5L930.5 309.5L913.5 342.5",
  "M831.5 309.5V359.5",
];

function Board() {
  return (
    <svg viewBox="410 145 652 558" className="block h-full w-full" fill="none" role="img" aria-label="PCB layout">
      <rect x="454.5" y="178.5" width="521" height="443" fill="#000" stroke="#c09a34" />
      {RESISTORS.map((r, i) => <Resistor key={i} {...r} />)}
      {CAPACITORS.map((c, i) => <Capacitor key={i} {...c} />)}

      <path d="M717 370H848.500V446H717V421A13 13 0 0 0 717 395Z" stroke={SILK} strokeWidth="2" />
      {[733.5, 766.5, 799.5, 831.5].map((x) => (
        <g key={x} stroke={PAD} strokeWidth="4.5">
          <circle cx={x} cy="359.5" r="7.200" />
          <circle cx={x} cy="457.5" r="7.200" />
        </g>
      ))}
      <Cross x={782.5} y={408.5} r={12} color="#93a82c" />

      {LABELS.map((l) => (
        <g key={l.t}>
          <text
            transform={`translate(${l.x} ${l.y})${l.v ? " rotate(-90)" : ""}`}
            fontSize={l.s}
            fill={SILK}
            className="font-['Liberation_Sans']"
          >
            {l.t}
          </text>
          <Cross x={l.cx} y={l.cy} r={7} />
        </g>
      ))}

      {AIRWIRES.map((d) => <path key={d} d={d} stroke="#aaa82c" />)}

      <path d="M446 621.500H464M454.500 612V631" stroke="#282828" strokeWidth="1" />
      <path d="M446 621.500H464M454.500 612V631" stroke="#fff" strokeWidth="1" strokeDasharray="1 1" />
    </svg>
  );
}

function FusionIcon() {
  return (
    <svg viewBox="0 0 17 17" className="size-[17px]" aria-hidden="true">
      <rect width="17" height="17" rx="2" fill="#f5a623" />
      <path d="M5 3H13V6H8.500V8H12V10.500H8.500V14H5Z" fill="#4a4038" />
      <path d="M5 3H7V14H5Z" fill="#8a6a3a" />
    </svg>
  );
}

function SideTabs() {
  const tab = "flex w-[27px] flex-col items-center bg-[#434343] text-[11px] font-bold text-[#f0f0f0]";
  return (
    <div className="absolute top-[9px] right-[3px] flex flex-col gap-4">
      <button className={clsx(tab, "h-[145px] gap-[6px] pt-2")}>
        <svg viewBox="0 0 17 17" className="size-[17px]" aria-hidden="true">
          <rect width="17" height="17" rx="2" fill="#1f8a45" />
          <path d="M5.500 2.500V14.500M8.500 2.500V14.500M11.500 2.500V14.500" stroke="#f0d820" />
          <rect x="4" y="5" width="9" height="7" fill="#1f8a45" stroke="#d8f0b0" />
        </svg>
        <span className="[writing-mode:vertical-rl]">MANUFACTURING</span>
      </button>
      <button className={clsx(tab, "h-[145px] gap-[10px] pt-[19px]")}>
        <FusionIcon />
        <span className="[writing-mode:vertical-rl]">FUSION 360</span>
      </button>
      <button className={clsx(tab, "h-[145px] gap-[10px] pt-[19px]")}>
        <FusionIcon />
        <span className="[writing-mode:vertical-rl]">FUSION TEAM</span>
      </button>
    </div>
  );
}

function Workspace() {
  return (
    <main className="flex min-w-0 flex-1 flex-col">
      <div className="flex h-[34px] shrink-0 items-center pr-1 pl-[7px]">
        <label htmlFor="command" className="w-[132px] shrink-0">50 mil (-100 1150)</label>
        <div className="relative h-[26px] flex-1">
          <input id="command" className="h-full w-full border border-[#0696d7] bg-white px-1 outline-none" />
          <Caret className="top-[11px] right-[5px]" />
        </div>
      </div>
      <div className="flex min-h-0 flex-1">
        <div className="relative min-w-0 flex-1 bg-[#282828]">
          <Board />
          <SideTabs />
        </div>
        <div className="flex w-[15px] shrink-0 justify-center">
          <div className="w-[6px] rounded-full bg-[#808080]" />
        </div>
      </div>
      <div className="mr-[15px] flex h-4 shrink-0 items-center">
        <div className="h-[6px] w-full rounded-full bg-[#808080]" />
      </div>
    </main>
  );
}

export default function App() {
  return (
    <div className="flex h-screen flex-col overflow-hidden border-b border-[#888] bg-[#ededed] font-['Noto_Sans','DejaVu_Sans',sans-serif] text-[12px] leading-4 text-[#3c3c3c]">
      <MenuBar />
      <MainToolbar />
      <OptionsBar />
      <div className="flex min-h-0 flex-1">
        <ToolPalette />
        <DesignManager />
        <div className="w-1 shrink-0 bg-[#d6d6d6]" />
        <Workspace />
      </div>
    </div>
  );
}
